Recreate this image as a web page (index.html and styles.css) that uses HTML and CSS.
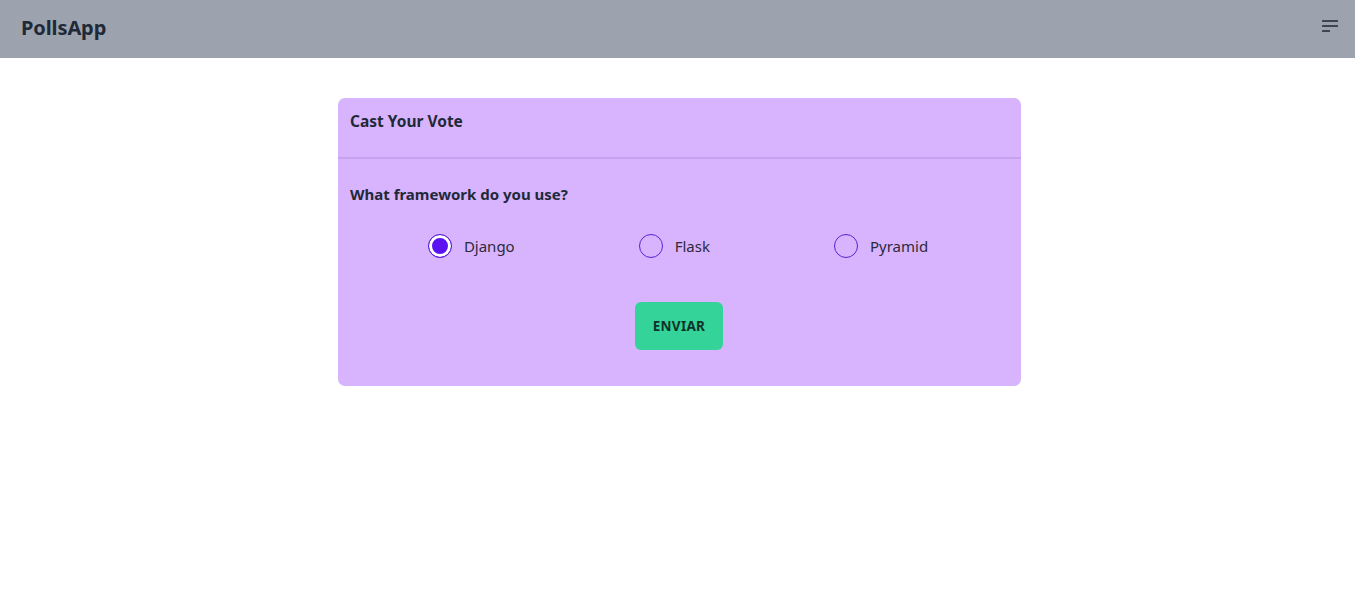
FILE: index.html
```html
<!DOCTYPE html>
<html lang="en">
<head>
<meta charset="utf-8">
<title>PollsApp</title>
<link rel="stylesheet" href="styles.css">
</head>
<body>
<nav class="navbar">
  <span class="brand">PollsApp</span>
  <button class="menu-btn" aria-label="menu">
    <svg width="16" height="12" viewBox="0 0 16 12"><rect x="0" y="0" width="16" height="2" rx="0.5" fill="#3f4451"/><rect x="0" y="5" width="16" height="2" rx="0.5" fill="#3f4451"/><rect x="0" y="10" width="8" height="2" rx="0.5" fill="#3f4451"/></svg>
  </button>
</nav>
<main class="main">
  <form class="card">
    <div class="card-header">Cast Your Vote</div>
    <div class="card-body">
      <p class="question">What framework do you use?</p>
      <div class="options">
        <label class="option"><span class="radio checked"></span><span>Django</span></label>
        <label class="option"><span class="radio"></span><span>Flask</span></label>
        <label class="option"><span class="radio"></span><span>Pyramid</span></label>
      </div>
      <div class="actions">
        <button type="button" class="btn">ENVIAR</button>
      </div>
    </div>
  </form>
</main>
</body>
</html>
```
FILE: styles.css
```css
* { box-sizing: border-box; }
html, body { margin: 0; padding: 0; background: #ffffff; }
body { font-family: "Noto Sans", "Open Sans", sans-serif; color: #1f2937; }

.navbar {
  height: 58px;
  background: #9ca3af;
  display: flex;
  align-items: center;
  justify-content: space-between;
  padding: 0 17px 0 21px;
}
.brand { font-size: 20px; font-weight: 700; color: #1f2937; letter-spacing: -0.1px; margin-top: -3px; }
.menu-btn { background: none; border: 0; padding: 0; display: flex; margin-top: -6px; }

.main { display: flex; justify-content: center; padding: 40px 0 0 4px; }
.card {
  width: 683px;
  background: #d8b4fe;
  border-radius: 7px;
}
.card-header {
  padding: 11px 12px 24px;
  font-size: 15.5px;
  font-weight: 700;
  line-height: 24px;
  border-bottom: 2px solid #c7a2ee;
}
.card-body { padding: 23px 12px 36px; }
.question { margin: 0; font-size: 15px; font-weight: 700; line-height: 24px; }
.options {
  display: flex;
  justify-content: center;
  gap: 124px;
  margin-top: 28px;
  padding-right: 3px;
}
.option { display: flex; align-items: center; gap: 12px; font-size: 15px; line-height: 24px; color: #2d2a3a; }
.radio {
  width: 24px; height: 24px;
  border-radius: 50%;
  border: 1px solid #5b21d6;
  flex: none;
}
.radio.checked {
  background: #5b12f0;
  box-shadow: inset 0 0 0 3px #ffffff;
  border: 1px solid #5b21d6;
}
.actions { display: flex; justify-content: center; margin-top: 44px; padding-right: 1px; }
.btn {
  width: 88px; height: 48px;
  border: 0;
  border-radius: 6px;
  background: #34d399;
  color: #0f3328;
  font-family: inherit;
  font-size: 13.5px;
  font-weight: 700;
  letter-spacing: 0.3px;
}
```
